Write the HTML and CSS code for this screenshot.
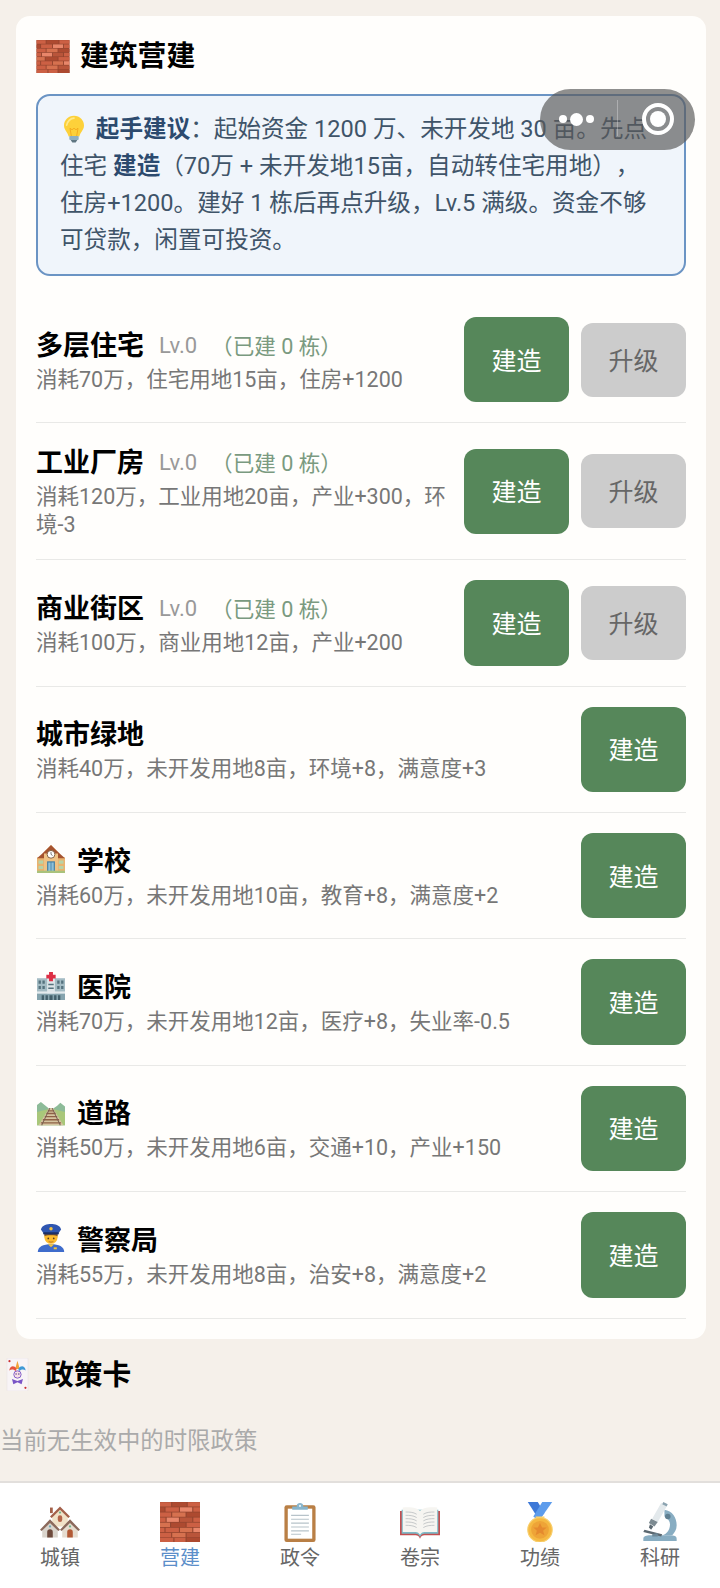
FILE: index.html
```html
<!DOCTYPE html>
<html lang="zh-CN">
<head>
  <meta charset="UTF-8" />
  <meta name="viewport" content="width=device-width, initial-scale=1.0"/>
  <title>建筑营建</title>
  <link rel="stylesheet" href="styles.css">
</head>
<body>

  <svg class="defs" width="0" height="0">
    <symbol id="i-brick" viewBox="0 0 36 36">
      <rect width="36" height="36" fill="#94452f"/>
      <g fill="#cc6044">
        <rect x="0" y="0.2" width="10" height="3.9"/><rect x="11" y="0.2" width="13" height="3.900" fill="#ad4a30"/><rect x="25" y="0.2" width="11" height="3.900"/>
        <rect x="0" y="4.800" width="4" height="3.900" fill="#ad4a30"/><rect x="5" y="4.800" width="12" height="3.900"/><rect x="18" y="4.800" width="11" height="3.900" fill="#e8866a"/><rect x="30" y="4.800" width="6" height="3.900"/>
        <rect x="0" y="9.400" width="10" height="3.900"/><rect x="11" y="9.400" width="12" height="3.900" fill="#d6714f"/><rect x="24" y="9.400" width="12" height="3.900" fill="#ad4a30"/>
        <rect x="0" y="14" width="5" height="3.900"/><rect x="6" y="14" width="11" height="3.900" fill="#e8866a"/><rect x="18" y="14" width="11" height="3.900" fill="#b9553a"/><rect x="30" y="14" width="6" height="3.900"/>
        <rect x="0" y="18.600" width="9" height="3.900" fill="#d6714f"/><rect x="10" y="18.600" width="13" height="3.900" fill="#ad4a30"/><rect x="24" y="18.600" width="12" height="3.900"/>
        <rect x="0" y="23.200" width="4" height="3.900"/><rect x="5" y="23.200" width="12" height="3.900"/><rect x="18" y="23.200" width="11" height="3.900" fill="#d6714f"/><rect x="30" y="23.200" width="6" height="3.900" fill="#e8866a"/>
        <rect x="0" y="27.800" width="10" height="3.900"/><rect x="11" y="27.800" width="12" height="3.900" fill="#d6714f"/><rect x="24" y="27.800" width="12" height="3.900" fill="#b9553a"/>
        <rect x="0" y="32.200" width="12" height="3.800"/><rect x="13" y="32.200" width="10" height="3.800"/><rect x="24" y="32.200" width="12" height="3.800" fill="#ad4a30"/>
      </g>
    </symbol>
    <symbol id="i-bulb" viewBox="0 0 36 36" preserveAspectRatio="none">
      <path d="M18 1C9 1 3 7 3 13.500c0 6 5.500 8.500 7 14h16c1.500-5.500 7-8 7-14C33 7 27 1 18 1z" fill="#fdd13a"/>
      <path d="M18 4c-5 0-10 4-11 9" fill="none" stroke="#ffe98a" stroke-width="2.500" stroke-linecap="round"/>
      <path d="M14 27l-2-10 3 2 3-2 3 2 3-2-2 10" fill="none" stroke="#f2a71b" stroke-width="1.200"/>
      <rect x="11" y="27" width="14" height="5" rx="1" fill="#8fb0c0"/>
      <path d="M13 32h10l-2.500 3.500h-5z" fill="#5f7682"/>
    </symbol>
    <symbol id="i-school" viewBox="0 0 36 36">
      <path d="M0 16h36v18H0z" fill="#e9b36f"/>
      <path d="M0 17L8 10h20l8 7z" fill="#a5532f"/>
      <path d="M18 0l9 9v25H9V9z" fill="#efc285"/>
      <path d="M18 0L7 11h22z" fill="#a5532f"/>
      <circle cx="18" cy="12" r="5" fill="#fff" stroke="#7d5a3c" stroke-width="1.200"/>
      <path d="M18 9v3l2 1.500" fill="none" stroke="#555" stroke-width="1"/>
      <rect x="13" y="21" width="10" height="13" fill="#3f7fa6"/><rect x="14.500" y="22.500" width="3" height="11" fill="#8fc0d8"/><rect x="18.500" y="22.500" width="3" height="11" fill="#8fc0d8"/>
      <path d="M2 20h6v4H2zM28 20h6v4h-6zM2 27h6v4H2zM28 27h6v4h-6z" fill="#b7d3a8"/>
      <rect y="33" width="36" height="3" fill="#a9c27c"/>
    </symbol>
    <symbol id="i-hospital" viewBox="0 0 36 36">
      <rect y="8" width="36" height="28" fill="#a4bcc4"/>
      <rect x="13" y="5" width="10" height="31" fill="#dfe7ea"/>
      <path d="M15.500 0h5v3.500H24v5h-3.500V12h-5V8.500H12v-5h3.500z" fill="#dd2e44"/>
      <path d="M2 11h3v4H2zM7 11h3v4H7zM26 11h3v4h-3zM31 11h3v4h-3zM2 18h3v4H2zM7 18h3v4H7zM26 18h3v4h-3zM31 18h3v4h-3z" fill="#55727d"/>
      <path d="M14.500 15h7v2h-7zM14.500 20h7v2h-7z" fill="#55727d"/>
      <rect y="25" width="36" height="3" fill="#e4ebee"/>
      <rect y="28" width="36" height="8" fill="#86a4ae"/>
      <path d="M6 30h3v6H6zM11 30h3v6h-3zM16 30h4v6h-4zM22 30h3v6h-3zM27 30h3v6h-3z" fill="#43606b"/>
    </symbol>
    <symbol id="i-rail" viewBox="0 0 36 36">
      <path d="M0 9l5-4 6 5 5 4h4l6-4 4-4 6 5v24H0z" fill="#8dbb98"/>
      <path d="M0 18l15-4h6l15 4v17H0z" fill="#a9c77a"/>
      <path d="M15.500 13h5L34 35H2z" fill="#d5c4a0"/>
      <path d="M14 16.500h8M12 20h12M10 24h16M7.500 28h21M5 32h26" stroke="#8f6145" stroke-width="1.800"/>
      <path d="M16.500 13L6 35M19.500 13L30 35" stroke="#7a6052" stroke-width="1.300"/>
    </symbol>
    <symbol id="i-police" viewBox="0 0 36 36">
      <path d="M1 36c0-7 7-10 17-10s17 3 17 10z" fill="#3f6ccb"/>
      <path d="M14 26l4 4 4-4z" fill="#f5c33b"/>
      <circle cx="18" cy="17" r="8.500" fill="#fdbb2e"/>
      <path d="M9.500 16c2-2 15-2 17 0v-3h-17z" fill="#8a5a2b"/>
      <path d="M5 7C7 1 13 0 18 0s11 1 13 7l-4 6H9z" fill="#2f56b0"/>
      <rect x="8" y="10.500" width="20" height="3" rx="1" fill="#1c2f66"/>
      <circle cx="18" cy="6" r="2.200" fill="#f5c33b"/>
      <circle cx="14.500" cy="18.500" r="1.100" fill="#5b3a1d"/><circle cx="21.500" cy="18.500" r="1.100" fill="#5b3a1d"/>
      <path d="M15 22.500c2 1 4 1 6 0" fill="none" stroke="#a8641c" stroke-width="1"/>
      <rect x="21.500" y="30" width="4" height="2.500" fill="#f5c33b"/>
    </symbol>
    <symbol id="i-joker" viewBox="0 0 36 36">
      <rect x="7" y="0" width="23" height="36" rx="1" fill="#f8f4f6" stroke="#e9e2e4" stroke-width=".6"/>
      <circle cx="9.800" cy="3.500" r="1.200" fill="#c33"/><circle cx="27.200" cy="32.500" r="1.200" fill="#c33"/>
      <path d="M18.500 3l2.500 9h-5z" fill="#f2a33a"/>
      <path d="M17.500 11.500c-3-4-7-3-8 2 3-1.500 5-1 7.500 1z" fill="#e5533d"/>
      <path d="M19.500 11.500c3-4 7-3 8 2-3-1.500-5-1-7.500 1z" fill="#3f9ad6"/>
      <circle cx="18.500" cy="18" r="4" fill="#f7dfe6" stroke="#7a55c7" stroke-width="1"/>
      <circle cx="17" cy="17.500" r=".8" fill="#503a8a"/><circle cx="20" cy="17.500" r=".8" fill="#503a8a"/>
      <path d="M12.500 23l6 2 6-2-1.500 5.500-4.500-2-4.500 2z" fill="#7a55c7"/>
    </symbol>
    <symbol id="i-houses" viewBox="0 0 36 36">
      <path d="M18 5l7 7v10H11V12z" fill="#f1e2c8"/>
      <path d="M18 4L9 13l1.500 1.500L18 7l7.500 7.500L27 13z" fill="#a4614a"/>
      <rect x="9" y="5" width="2.500" height="5" fill="#a4614a"/>
      <rect x="16" y="12" width="4" height="6" rx="2" fill="#b5654a"/><circle cx="18" cy="9.500" r="1" fill="#6fb58f"/>
      <path d="M9 17l7 7v8H2v-8z" fill="#d9d4cc"/><path d="M27 17l7 7v8H20v-8z" fill="#e5dccf"/>
      <path d="M9 15.500L0 25l1.500 1L9 19l7.500 7 1.500-1zM27 15.500L18 25l1.500 1L27 19l7.500 7 1.500-1z" fill="#8b6a5c"/>
      <path d="M6.500 32v-5a2.500 2.500 0 015 0v5z" fill="#6d4a3c"/><path d="M24.500 32v-5a2.500 2.500 0 015 0v5z" fill="#b25a35"/>
      <circle cx="9" cy="22" r="1" fill="#6fa8b5"/><circle cx="27" cy="22" r="1" fill="#6fb58f"/>
    </symbol>
    <symbol id="i-clip" viewBox="0 0 36 36">
      <rect x="4" y="3" width="28" height="33" rx="2" fill="#b97f45"/>
      <rect x="7" y="6" width="22" height="27" fill="#fff"/>
      <path d="M10 12h16M10 15.500h16M10 19h16M10 22.500h16M10 26h16M10 29h9" stroke="#b7c3ca" stroke-width="1"/>
      <path d="M11 7V4h4c0-4 6-4 6 0h4v3z" fill="#86b4cc"/>
      <circle cx="18" cy="3.500" r="1" fill="#e6f1f6"/>
    </symbol>
    <symbol id="i-book" viewBox="0 0 36 36">
      <path d="M0 8v22h14c2 0 3 1 4 3 1-2 2-3 4-3h14V8z" fill="#c24f50"/>
      <path d="M1.500 7v21.500H14c2 0 3 1 4 3 1-2 2-3 4-3h12.500V7z" fill="#7db9c6"/>
      <path d="M2.500 5v22H14c2 0 3 1 4 2.500V8C16 5.500 10 4 2.500 5zM33.500 5v22H22c-2 0-3 1-4 2.500V8c2-2.500 8-4 15.500-3z" fill="#f6f5f1"/>
      <path d="M5 9c3 0 7 0 10 2M5 12c3 0 7 0 10 2M5 15c3 0 7 0 10 2M5 18c3 0 7 0 10 2M5 21c3 0 7 0 10 2M31 9c-3 0-7 0-10 2M31 12c-3 0-7 0-10 2M31 15c-3 0-7 0-10 2M31 18c-3 0-7 0-10 2M31 21c-3 0-7 0-10 2" fill="none" stroke="#c6c9ca" stroke-width=".9"/>
    </symbol>
    <symbol id="i-medal" viewBox="0 0 36 36">
      <path d="M7 0h9l6 10-5 6z" fill="#3d79d8"/>
      <path d="M29 0h-9l-8 13 5 4z" fill="#5d9cec"/>
      <circle cx="18" cy="25" r="11" fill="#f5b942" stroke="#f8cf6d" stroke-width="1"/>
      <circle cx="18" cy="25" r="8" fill="#eea437"/>
      <path d="M18 19l1.900 4h4.100l-3.200 2.800 1.200 4.200-4-2.400-4 2.400 1.200-4.200L12 23h4.100z" fill="#e58a2e"/>
      <rect x="14" y="13" width="8" height="1.600" fill="#f8cf6d"/>
    </symbol>
    <symbol id="i-scope" viewBox="0 0 36 36">
      <path d="M22 7c7 1 11 7 11 14 0 4-2 7-4 9h-9c4-1 7-5 7-10 0-3-2-5-5-7z" fill="#88adc2"/>
      <path d="M3 33c0-2 3-3 6-3h18c4 0 6 1 6 3v2H3z" fill="#88adc2"/>
      <path d="M19 1l5 3-8 14-5-3z" fill="#e3e9ec"/>
      <path d="M21 0l4 2-1 2-4-2z" fill="#8ba3b0"/>
      <path d="M10 15l6 3-3 4-5-3z" fill="#7c8a91"/>
      <path d="M9 20l3 2-2 3-2-2z" fill="#5b6870"/>
      <path d="M4 25l16 4-1 2-16-4z" fill="#5b6870"/>
      <circle cx="25" cy="13" r="2.500" fill="#5f7f91"/>
      <path d="M11 29l5-1v3h-5z" fill="#6f8a99"/>
    </symbol>
  </svg>

  <main class="page">
    <section class="card">
      <h2 class="title"><svg class="title-ico"><use href="#i-brick"/></svg>建筑营建</h2>
      <div class="tip">
        <svg class="tip-ico"><use href="#i-bulb"/></svg> <b>起手建议</b>：起始资金 1200 万、未开发地 30 亩。先点住宅 <b>建造</b>（70万 + 未开发地15亩，自动转住宅用地），住房+1200。建好 1 栋后再点升级，Lv.5 满级。资金不够可贷款，闲置可投资。
      </div>

      <div class="row">
        <div class="info">
          <div class="name">多层住宅<span class="lv">Lv.0</span><span class="count">（已建 0 栋）</span></div>
          <div class="desc">消耗70万，住宅用地15亩，住房+1200</div>
        </div>
        <button class="btn">建造</button>
        <button class="btn btn-up">升级</button>
      </div>
      <div class="row">
        <div class="info">
          <div class="name">工业厂房<span class="lv">Lv.0</span><span class="count">（已建 0 栋）</span></div>
          <div class="desc">消耗120万，工业用地20亩，产业+300，环境-3</div>
        </div>
        <button class="btn">建造</button>
        <button class="btn btn-up">升级</button>
      </div>
      <div class="row">
        <div class="info">
          <div class="name">商业街区<span class="lv">Lv.0</span><span class="count">（已建 0 栋）</span></div>
          <div class="desc">消耗100万，商业用地12亩，产业+200</div>
        </div>
        <button class="btn">建造</button>
        <button class="btn btn-up">升级</button>
      </div>
      <div class="row">
        <div class="info">
          <div class="name">城市绿地</div>
          <div class="desc">消耗40万，未开发用地8亩，环境+8，满意度+3</div>
        </div>
        <button class="btn">建造</button>
      </div>
      <div class="row">
        <div class="info">
          <div class="name"><svg class="name-ico"><use href="#i-school"/></svg>学校</div>
          <div class="desc">消耗60万，未开发用地10亩，教育+8，满意度+2</div>
        </div>
        <button class="btn">建造</button>
      </div>
      <div class="row">
        <div class="info">
          <div class="name"><svg class="name-ico"><use href="#i-hospital"/></svg>医院</div>
          <div class="desc">消耗70万，未开发用地12亩，医疗+8，失业率-0.5</div>
        </div>
        <button class="btn">建造</button>
      </div>
      <div class="row">
        <div class="info">
          <div class="name"><svg class="name-ico"><use href="#i-rail"/></svg>道路</div>
          <div class="desc">消耗50万，未开发用地6亩，交通+10，产业+150</div>
        </div>
        <button class="btn">建造</button>
      </div>
      <div class="row">
        <div class="info">
          <div class="name"><svg class="name-ico"><use href="#i-police"/></svg>警察局</div>
          <div class="desc">消耗55万，未开发用地8亩，治安+8，满意度+2</div>
        </div>
        <button class="btn">建造</button>
      </div>
    </section>

    <section class="policy">
      <h2 class="title"><svg class="policy-ico"><use href="#i-joker"/></svg>政策卡</h2>
      <p class="empty">当前无生效中的时限政策</p>
    </section>
  </main>

  <nav class="tabbar">
    <div class="tab"><svg class="tab-ico"><use href="#i-houses"/></svg><span>城镇</span></div>
    <div class="tab active"><svg class="tab-ico"><use href="#i-brick"/></svg><span>营建</span></div>
    <div class="tab"><svg class="tab-ico"><use href="#i-clip"/></svg><span>政令</span></div>
    <div class="tab"><svg class="tab-ico"><use href="#i-book"/></svg><span>卷宗</span></div>
    <div class="tab"><svg class="tab-ico"><use href="#i-medal"/></svg><span>功绩</span></div>
    <div class="tab"><svg class="tab-ico"><use href="#i-scope"/></svg><span>科研</span></div>
  </nav>

  <!-- capsule of the host app, floats over the page -->
  <div class="capsule">
    <span class="dots"><i></i><i class="big"></i><i></i></span>
    <span class="sep"></span>
    <span class="ring"></span>
  </div>

</body>
</html>
```

FILE: styles.css
```css
* {
  box-sizing: border-box;
}
body {
  margin: 0;
  width: 720px;
  height: 1588px;
  overflow: hidden;
  display: flex;
  flex-direction: column;
  position: relative;
  font-family: Roboto, "Noto Sans CJK SC", sans-serif;
  background: #f5f0ea;
  color: #000;
}
.defs {
  position: absolute;
}
.page {
  flex: 1;
  padding-top: 16px;
  overflow: hidden;
}
.card {
  margin: 0 14px 0 16px;
  padding: 22px 20px 20px;
  background: #fffefc;
  border-radius: 14px;
}
.title {
  margin: 0;
  height: 36px;
  display: flex;
  align-items: center;
  font-size: 28.8px;
  line-height: 36px;
  font-weight: 700;
}
.title-ico {
  width: 34px;
  height: 33px;
  margin-right: 10px;
}
.tip {
  margin-top: 19.5px;
  margin-bottom: 20.5px;
  padding: 15px 30px 15px 22px;
  background: #f0f5fb;
  border: 2px solid #6b94c4;
  border-radius: 14px;
  font-size: 23.6px;
  line-height: 37.2px;
  color: #3f5469;
  text-spacing-trim: space-all;
}
.tip b {
  color: #2c4a6e;
}
.tip-ico {
  width: 24px;
  height: 28px;
  margin: 0 4px 0 2px;
  vertical-align: -6px;
}
.row {
  display: flex;
  align-items: center;
  gap: 12px;
  padding: 20px 0;
  border-bottom: 1px solid #e9e9e7;
}
.info {
  flex: 1;
  min-width: 0;
}
.name {
  display: flex;
  align-items: center;
  height: 35px;
  margin-bottom: 5px;
  font-size: 27px;
  font-weight: 700;
}
.lv {
  margin-left: 15px;
  margin-top: 4px;
  font-size: 22px;
  font-weight: 400;
  color: #999;
}
.count {
  margin-left: 14px;
  margin-top: 2px;
  font-size: 21.6px;
  font-weight: 400;
  color: #7a9a80;
}
.name-ico {
  width: 30px;
  height: 28px;
  margin-right: 11px;
}
.desc {
  font-size: 21.5px;
  line-height: 28px;
  color: #777;
}
.btn {
  flex: none;
  width: 105px;
  height: 85.4px;
  padding: 0 0 2px;
  border: none;
  border-radius: 12px;
  background: #56875a;
  color: #fff;
  font-family: inherit;
  font-size: 25px;
}
.btn-up {
  height: 74px;
  background: #ccc;
  color: #666;
}
.policy .title {
  margin-top: 18px;
}
.policy-ico {
  width: 34px;
  height: 33px;
  margin-right: 11px;
}
.empty {
  margin: 32px 0 0;
  font-size: 23.4px;
  line-height: 32px;
  color: #aaa;
}
.tabbar {
  flex: none;
  height: 107px;
  display: flex;
  padding-top: 19px;
  background: #fff;
  border-top: 2px solid #e2dfdc;
}
.tab {
  flex: 1;
  display: flex;
  flex-direction: column;
  align-items: center;
  font-size: 20px;
  line-height: 26px;
  color: #666;
}
.tab-ico {
  width: 40px;
  height: 40px;
  margin-bottom: 3px;
}
.tab.active {
  color: #5b8ec9;
}
.capsule {
  position: absolute;
  left: 540px;
  top: 89px;
  width: 155px;
  height: 61px;
  border-radius: 31px;
  background: rgba(90, 90, 90, 0.68);
}
.dots {
  position: absolute;
  left: 19px;
  top: 23px;
  display: flex;
  align-items: center;
  gap: 3px;
  height: 14px;
}
.dots i {
  width: 8px;
  height: 8px;
  border-radius: 50%;
  background: #fff;
}
.dots i.big {
  width: 13px;
  height: 13px;
}
.sep {
  position: absolute;
  left: 77px;
  top: 11px;
  width: 1px;
  height: 36px;
  background: rgba(255, 255, 255, 0.3);
}
.ring {
  position: absolute;
  left: 102px;
  top: 14px;
  width: 32px;
  height: 32px;
  border: 4px solid #fff;
  border-radius: 50%;
}
.ring::after {
  content: "";
  position: absolute;
  left: 4px;
  top: 4px;
  width: 16px;
  height: 16px;
  border-radius: 50%;
  background: #fff;
}
```
